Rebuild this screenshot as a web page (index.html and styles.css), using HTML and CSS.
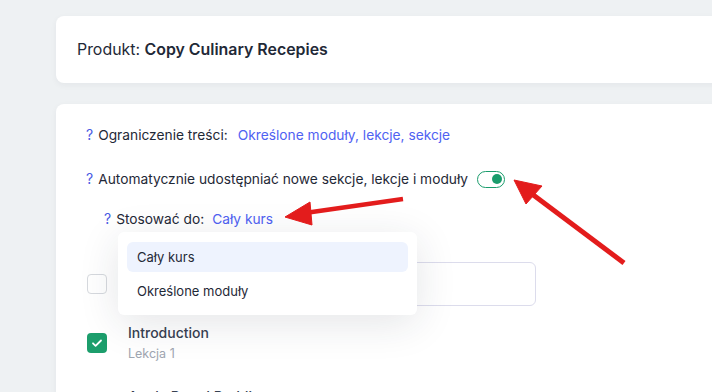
FILE: index.html
```html
<!DOCTYPE html>
<html lang="pl">
<head>
<meta charset="utf-8">
<link rel="stylesheet" href="styles.css">
</head>
<body>
<main class="page">
  <section class="card card-head">
    <h1 class="title">Produkt: <strong>Copy Culinary Recepies</strong></h1>
  </section>
  <section class="card card-body">
    <div class="row">
      <span class="help">?</span>
      <span class="label">Ograniczenie treści:</span>
      <a class="link">Określone moduły, lekcje, sekcje</a>
    </div>
    <div class="row row-auto">
      <span class="help">?</span>
      <span class="label">Automatycznie udostępniać nowe sekcje, lekcje i moduły</span>
      <span class="toggle"><span class="knob"></span></span>
    </div>
    <div class="row row-apply">
      <span class="help">?</span>
      <span class="label">Stosować do:</span>
      <a class="link">Cały kurs</a>
    </div>
    <div class="list">
      <div class="item item-search">
        <span class="check"></span>
        <span class="input"></span>
      </div>
      <div class="item">
        <span class="check checked">
          <svg viewBox="0 0 20 20" width="20" height="20"><path d="M6 10.3l2.6 2.6L14 7.5" fill="none" stroke="#fff" stroke-width="1.8" stroke-linecap="round" stroke-linejoin="round"/></svg>
        </span>
        <div class="item-text">
          <div class="item-title">Introduction</div>
          <div class="item-sub">Lekcja 1</div>
        </div>
      </div>
      <div class="item">
        <span class="check"></span>
        <div class="item-text">
          <div class="item-title">Apple Bread Pudding</div>
          <div class="item-sub">Lekcja 2</div>
        </div>
      </div>
    </div>
    <div class="menu">
      <div class="menu-item active">Cały kurs</div>
      <div class="menu-item">Określone moduły</div>
    </div>
  </section>
</main>
<svg class="arrows" width="712" height="392" viewBox="0 0 712 392">
  <g fill="#e31c1c" stroke="#e31c1c" stroke-linecap="butt">
    <line x1="403" y1="199" x2="305" y2="213" stroke-width="4.5"/>
    <polygon points="285,217 310,202 312,225" stroke-width="1" stroke-linejoin="round"/>
    <line x1="624" y1="263" x2="532" y2="194" stroke-width="5"/>
    <polygon points="514,180 542,186 526,204" stroke-width="1" stroke-linejoin="round"/>
  </g>
</svg>
</body>
</html>
```
FILE: styles.css
```css
html, body {
  margin: 0;
  padding: 0;
}
body {
  background: #eef1f3;
  font-family: Inter, "Noto Sans", "Liberation Sans", sans-serif;
  color: #1f2937;
  width: 712px;
  height: 392px;
  overflow: hidden;
  position: relative;
}
.page {
  padding: 16px 0 0 56px;
  display: flex;
  flex-direction: column;
  gap: 21px;
}
.card {
  background: #fff;
  border-radius: 8px;
  margin-right: -20px;
  box-shadow: 0 2px 6px rgba(30, 41, 59, 0.05);
}
.card-head {
  height: 67px;
  display: flex;
  align-items: center;
  padding-left: 21px;
}
.title {
  margin: 0;
  font-size: 15.9px;
  font-weight: 400;
  color: #1f2937;
  line-height: 20px;
}
.title strong {
  font-weight: 600;
}
.card-body {
  position: relative;
  padding: 21px 0 60px 30px;
}
.row {
  display: flex;
  align-items: center;
  height: 20px;
  font-size: 13.75px;
  line-height: 20px;
}
.help {
  color: #4b5ae4;
  font-size: 14px;
  margin-right: 5px;
}
.label {
  color: #1f2937;
}
.link {
  color: #4f62f2;
  margin-left: 10px;
}
.row-auto {
  margin-top: 24px;
}
.row-apply {
  margin-top: 20px;
  padding-left: 18px;
}
.row-apply .link {
  margin-left: 8px;
}
.toggle {
  box-sizing: border-box;
  margin-left: 9px;
  width: 28px;
  height: 17px;
  border: 1.5px solid #1a9c6c;
  border-radius: 9px;
  display: flex;
  align-items: center;
  justify-content: flex-end;
  padding: 0 2.5px;
}
.knob {
  width: 10px;
  height: 10px;
  border-radius: 50%;
  background: #1a9c6c;
}
.list {
  margin-top: 33px;
  display: flex;
  flex-direction: column;
}
.item {
  display: flex;
  align-items: center;
  gap: 21px;
  padding-left: 1px;
}
.item + .item {
  margin-top: 26px;
}
.item-search {
  height: 44px;
  gap: 12px;
}
.item-search + .item {
  margin-top: 18px;
}
.check {
  width: 18px;
  height: 18px;
  border: 1px solid #d6d9de;
  border-radius: 4px;
  background: #fff;
  flex: none;
}
.check.checked {
  width: 20px;
  height: 20px;
  border: none;
  background: #1c9e6c;
  display: flex;
}
.input {
  width: 415px;
  height: 42px;
  border: 1px solid #dcdcec;
  border-radius: 6px;
}
.item-title {
  font-size: 14px;
  font-weight: 500;
  line-height: 18px;
  color: #374151;
}
.item-sub {
  font-size: 12.5px;
  line-height: 16px;
  margin-top: 4px;
  color: #a0a6b1;
}
.menu {
  position: absolute;
  left: 62px;
  top: 128px;
  width: 281px;
  padding: 10px 9px 9px;
  background: #fff;
  border-radius: 6px;
  box-shadow: 0 8px 40px rgba(30, 41, 59, 0.12);
  display: flex;
  flex-direction: column;
  gap: 4px;
}
.menu-item {
  height: 30px;
  line-height: 30px;
  padding-left: 10px;
  font-size: 13px;
  color: #1f2937;
  border-radius: 6px;
}
.menu-item.active {
  background: #eef3fe;
}
.arrows {
  position: absolute;
  left: 0;
  top: 0;
  pointer-events: none;
}
```
